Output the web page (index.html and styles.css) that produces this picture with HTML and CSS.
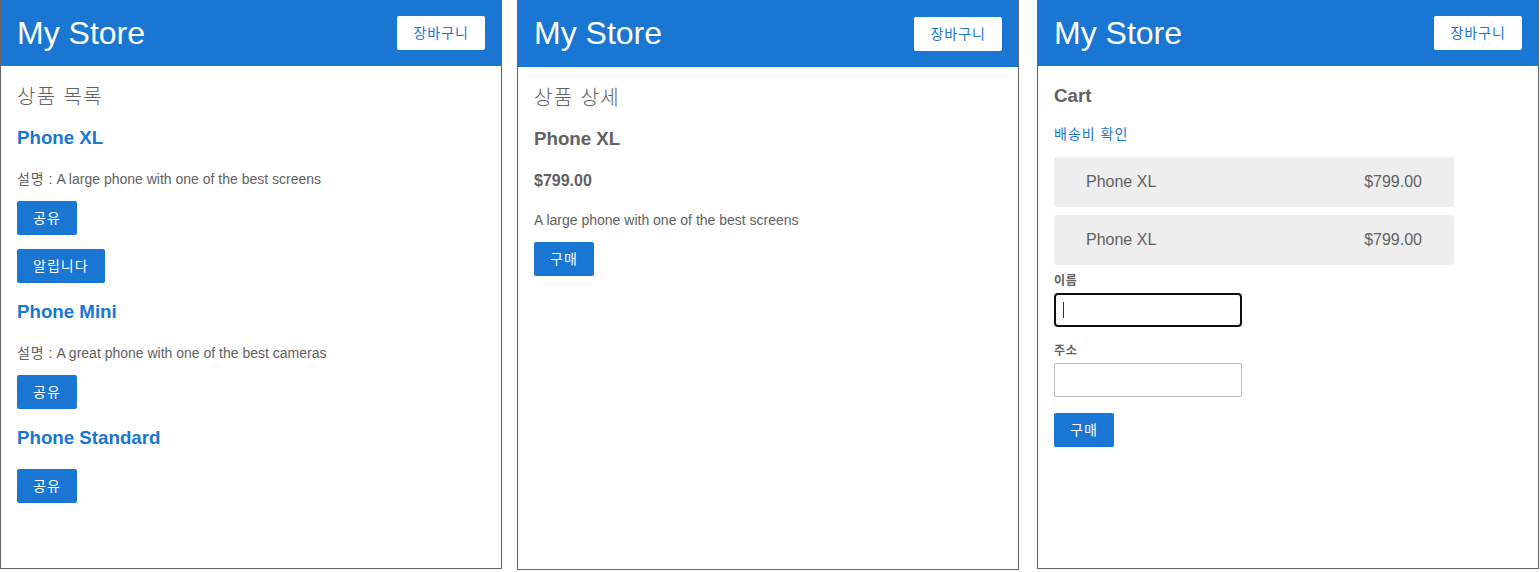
FILE: index.html
```html
<!DOCTYPE html>
<html lang="ko">
<head>
<meta charset="utf-8">
<title>My Store</title>
<link rel="stylesheet" href="styles.css">
</head>
<body>
<div class="screens">
  <section class="panel panel-list">
    <header class="topbar">
      <h1 class="brand">My Store</h1>
      <button class="cart-btn">장바구니</button>
    </header>
    <main class="page">
      <h2 class="page-title">상품 목록</h2>
      <div class="product">
        <h3 class="product-name"><a class="link">Phone XL</a></h3>
        <p class="desc"><span class="ko">설명</span> : A large phone with one of the best screens</p>
        <button class="btn btn-share">공유</button>
        <p class="alert"><button class="btn">알립니다</button></p>
      </div>
      <div class="product">
        <h3 class="product-name"><a class="link">Phone Mini</a></h3>
        <p class="desc"><span class="ko">설명</span> : A great phone with one of the best cameras</p>
        <button class="btn btn-share">공유</button>
      </div>
      <div class="product">
        <h3 class="product-name"><a class="link">Phone Standard</a></h3>
        <button class="btn btn-share btn-nodesc">공유</button>
      </div>
    </main>
  </section>

  <section class="panel panel-detail">
    <header class="topbar topbar-tall">
      <h1 class="brand">My Store</h1>
      <button class="cart-btn">장바구니</button>
    </header>
    <main class="page">
      <h2 class="page-title">상품 상세</h2>
      <div class="detail">
        <h3 class="detail-name">Phone XL</h3>
        <h4 class="detail-price">$799.00</h4>
        <p class="detail-desc">A large phone with one of the best screens</p>
        <button class="btn btn-buy">구매</button>
      </div>
    </main>
  </section>

  <section class="panel panel-cart">
    <header class="topbar">
      <h1 class="brand">My Store</h1>
      <button class="cart-btn">장바구니</button>
    </header>
    <main class="page">
      <h3 class="cart-title">Cart</h3>
      <p class="shipping"><a class="link">배송비 확인</a></p>
      <div class="cart-item"><span>Phone XL</span><span>$799.00</span></div>
      <div class="cart-item"><span>Phone XL</span><span>$799.00</span></div>
      <form class="checkout">
        <div class="field">
          <label class="field-label" for="name">이름</label>
          <input class="field-input field-input-focus" id="name" type="text">
        </div>
        <div class="field">
          <label class="field-label" for="address">주소</label>
          <input class="field-input" id="address" type="text">
        </div>
        <button class="btn btn-submit" type="button">구매</button>
      </form>
    </main>
  </section>
</div>
</body>
</html>
```

FILE: styles.css
```css
* {
  box-sizing: border-box;
  font-family: "Liberation Sans", "Noto Sans CJK KR", sans-serif;
  color: #616161;
}

html, body {
  margin: 0;
  padding: 0;
  background: #ffffff;
}

.screens {
  display: flex;
  align-items: flex-start;
}

.panel {
  width: 502px;
  height: 569px;
  border: 1px solid #666666;
  border-top: none;
  background: #ffffff;
  display: flex;
  flex-direction: column;
}

.panel-detail {
  margin-left: 15px;
  height: 570px;
}

.panel-cart {
  margin-left: 18px;
}

.topbar {
  height: 66px;
  background: #1976d2;
  padding: 0 16px;
  display: flex;
  justify-content: space-between;
  align-items: center;
  flex-shrink: 0;
}

.topbar-tall {
  height: 67px;
}

.brand {
  margin: 0;
  font-size: 32px;
  font-weight: normal;
  line-height: 37px;
  color: #ffffff;
}

.ko {
  letter-spacing: 0.07em;
}

.cart-btn {
  height: 34px;
  padding: 0 16px;
  border: none;
  border-radius: 2px;
  background: #ffffff;
  color: #1976d2;
  font-size: 14px;
  line-height: 16px;
  letter-spacing: 1px;
  display: flex;
  align-items: center;
}

.page {
  padding: 0 16px;
}

.page-title {
  margin: 19px 0 0;
  font-size: 20px;
  line-height: 24px;
  font-weight: 300;
  letter-spacing: 1.4px;
}

.link {
  color: #1976d2;
  text-decoration: none;
}

.product-name {
  margin: 18px 0 0;
  font-size: 18.72px;
  line-height: 22px;
  font-weight: bold;
}

.product-name .link {
  font-weight: bold;
}

.desc {
  margin: 20px 0 0;
  font-size: 14px;
  line-height: 20px;
}

.btn {
  display: flex;
  align-items: center;
  height: 34px;
  padding: 0 16px;
  border: none;
  border-radius: 2px;
  background: #1976d2;
  color: #ffffff;
  font-size: 14px;
  line-height: 16px;
  letter-spacing: 1px;
}

.btn-share {
  margin-top: 12px;
}

.btn-nodesc {
  margin-top: 20px;
}

.alert {
  margin: 14px 0 0;
}

.detail-name {
  margin: 18px 0 0;
  font-size: 18.72px;
  line-height: 22px;
  font-weight: bold;
}

.detail-price {
  margin: 21px 0 0;
  font-size: 16px;
  line-height: 20px;
  font-weight: bold;
}

.detail-desc {
  margin: 19px 0 0;
  font-size: 14px;
  line-height: 20px;
}

.btn-buy {
  margin-top: 12px;
}

.cart-title {
  margin: 19px 0 0;
  font-size: 18.72px;
  line-height: 22px;
  font-weight: bold;
}

.shipping {
  margin: 17px 0 0;
  font-size: 14px;
  line-height: 20px;
}

.shipping .link {
  letter-spacing: 1px;
}

.cart-item {
  width: 400px;
  height: 50px;
  margin-top: 13px;
  padding: 0 32px;
  border-radius: 2px;
  background: #eeeeee;
  display: flex;
  justify-content: space-between;
  align-items: center;
  font-size: 16px;
  line-height: 18px;
}

.cart-item + .cart-item {
  margin-top: 8px;
}

.checkout {
  margin-top: 8px;
}

.field-label {
  display: block;
  font-size: 12px;
  line-height: 16px;
  font-weight: bold;
  letter-spacing: 0.8px;
  margin-bottom: 4px;
}

.field-input {
  display: block;
  width: 188px;
  height: 34px;
  margin: 0 0 16px;
  padding: 0 8px;
  font-size: 14px;
  border: 1px solid #bdbdbd;
  border-radius: 2px;
  outline: none;
  color: #333333;
  background: #ffffff;
}

.field-input-focus {
  border: 2px solid #101010;
  border-radius: 4px;
  background-image: linear-gradient(#333333, #333333);
  background-repeat: no-repeat;
  background-position: 7px 7px;
  background-size: 1px 16px;
}

.btn-submit {
  margin-top: 0;
}
```
